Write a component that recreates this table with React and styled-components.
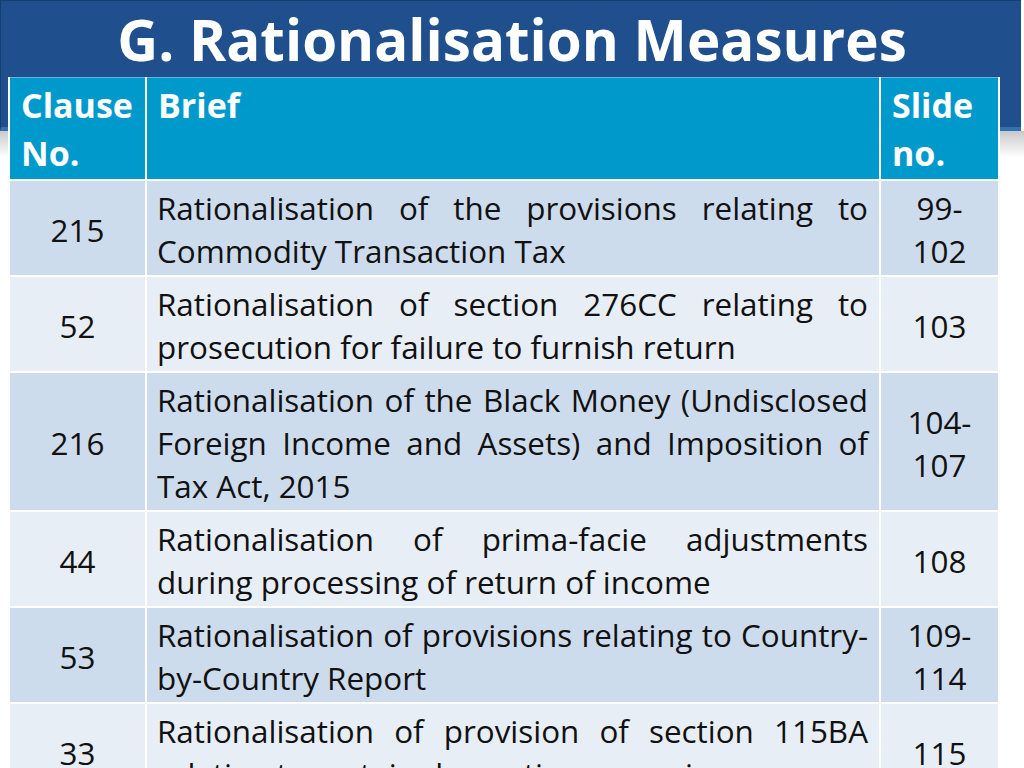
import React from "react";
import styled, { createGlobalStyle } from "styled-components";

const Global = createGlobalStyle`
  html, body { margin: 0; padding: 0; background: #ffffff; }
  body { width: 1024px; height: 768px; overflow: hidden; font-family: "Open Sans", "Noto Sans", sans-serif; }
`;

const Slide = styled.div`
  width: 1024px;
  height: 768px;
  overflow: hidden;
  display: grid;
  grid-template-columns: 1fr;
  grid-template-rows: 77px auto;
  background: #ffffff;
`;

const Band = styled.div`
  grid-row: 1 / 3;
  grid-column: 1;
  align-self: start;
  position: relative;
  height: 126px;
  margin-right: 3px;
  background: #1f4f8d;
  border-top: 1px solid #183e6f;
  border-left: 1px solid #183e6f;
  border-bottom: 4px solid #2f72b6;
  &::after {
    content: "";
    position: absolute;
    left: -1px;
    right: -3px;
    top: 100%;
    margin-top: 4px;
    height: 26px;
    background: linear-gradient(#c9c9c9, rgba(255, 255, 255, 0));
  }
`;

const Title = styled.h1`
  grid-row: 1;
  grid-column: 1;
  z-index: 1;
  margin: 0;
  padding-top: 2px;
  text-align: center;
  color: #ffffff;
  font-family: "Open Sans", "Noto Sans", sans-serif;
  font-weight: 700;
  font-size: 56.5px;
  line-height: 76px;
  letter-spacing: 0;
`;

const TableWrap = styled.div`
  grid-row: 2;
  grid-column: 1;
  z-index: 1;
  padding-left: 8px;
  width: 990px;
`;

const Table = styled.table`
  width: 990px;
  border-collapse: collapse;
  table-layout: fixed;
  font-family: "Open Sans", "Noto Sans", sans-serif;
`;

const Col = styled.col`
  width: ${(p) => p.$w}px;
`;

const HeadCell = styled.th`
  background: #0099cc;
  color: #ffffff;
  font-weight: 700;
  font-size: 34px;
  line-height: 48px;
  text-align: left;
  vertical-align: top;
  padding: 3px 8px 2px 11px;
  border: 2px solid #ffffff;
  border-top: 1px solid #5fb8dc;
`;

const Row = styled.tr`
  background: ${(p) => (p.$alt ? "#e7eef6" : "#cddcec")};
`;

const Cell = styled.td`
  color: #111111;
  font-size: 31.4px;
  line-height: 43px;
  padding: 5px ${(p) => (p.$center ? "6px" : "11px")} 3px ${(p) => (p.$center ? "6px" : "10px")};
  text-align: ${(p) => (p.$center ? "center" : "justify")};
  vertical-align: middle;
  border: 2px solid #ffffff;
`;

const rows = [
  { no: "215", brief: "Rationalisation of the provisions relating to Commodity Transaction Tax", slide: ["99-", "102"] },
  { no: "52", brief: "Rationalisation of section 276CC relating to prosecution for failure to furnish return", slide: ["103"] },
  { no: "216", brief: "Rationalisation of the Black Money (Undisclosed Foreign Income and Assets) and Imposition of Tax Act, 2015", slide: ["104-", "107"] },
  { no: "44", brief: "Rationalisation of prima-facie adjustments during processing of return of income", slide: ["108"] },
  { no: "53", brief: "Rationalisation of provisions relating to Country-by-Country Report", slide: ["109-", "114"] },
  { no: "33", brief: "Rationalisation of provision of section 115BA relating to certain domestic companies", slide: ["115"] },
];

export default function App() {
  return (
    <>
      <Global />
      <Slide>
        <Band />
        <Title>G. Rationalisation Measures</Title>
        <TableWrap>
          <Table>
            <colgroup>
              <Col $w={137} />
              <Col $w={734} />
              <Col $w={119} />
            </colgroup>
            <thead>
              <tr>
                <HeadCell>Clause No.</HeadCell>
                <HeadCell>Brief</HeadCell>
                <HeadCell>Slide no.</HeadCell>
              </tr>
            </thead>
            <tbody>
              {rows.map((r, i) => (
                <Row key={r.no} $alt={i % 2 === 1}>
                  <Cell $center>{r.no}</Cell>
                  <Cell>{r.brief}</Cell>
                  <Cell $center>
                    {r.slide.map((s, j) => (
                      <React.Fragment key={j}>
                        {j > 0 && <br />}
                        {s}
                      </React.Fragment>
                    ))}
                  </Cell>
                </Row>
              ))}
            </tbody>
          </Table>
        </TableWrap>
      </Slide>
    </>
  );
}
